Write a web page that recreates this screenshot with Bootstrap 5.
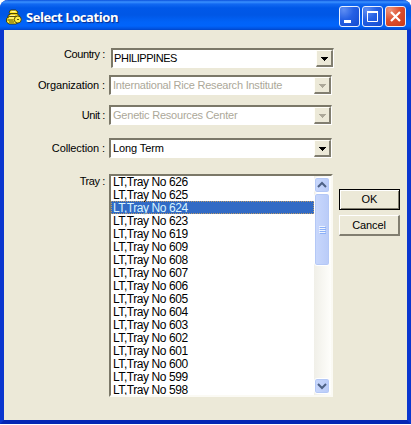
<!DOCTYPE html>
<html lang="en">
<head>
<meta charset="utf-8">
<title>Select Location</title>
<link href="https://cdn.jsdelivr.net/npm/bootstrap@5.3.0/dist/css/bootstrap.min.css" rel="stylesheet">
<style>
body{background:#fff;font:11px/13px "Liberation Sans",Arial,sans-serif;color:#000}
.win{width:411px;height:424px;background:#ece9d8;border:solid;border-width:0 4px 4px;border-color:#0a3fd6 #0a36cf #0427b4;border-radius:8px 8px 0 0}
.titlebar{height:30px;margin:0 -4px;padding:3px 5px 0 6px;border-radius:8px 8px 0 0;background:linear-gradient(#0a50dc 0,#3a91ff 2px,#1269f2 4px,#0058e8 8px,#0057e6 15px,#0163f8 22px,#0164fb 26px,#0150dc 29px,#0144c6 30px)}
.caption{font:bold 13px/18px "Open Sans",sans-serif;color:#fff;text-shadow:1px 1px 1px #0b2b8a;letter-spacing:-.42px;margin-left:4px}
.winbtns{gap:2px}
.winbtn{width:21px;height:21px;border:1px solid #e8f0ff;border-radius:3px;background:radial-gradient(circle at 20% 15%,#5f8ef2,#2560e4 45%,#134bd0)}
.winbtn.close-x{background:radial-gradient(circle at 20% 15%,#ee957c,#dd5030 45%,#c8391a)}
.formrow{padding-left:4px}
.lbl{width:97px;text-align:right;white-space:pre}
.combo{width:223px;height:20px;background:#fff;border:solid;border-width:2px 1px 1px 2px;border-color:#7b7868 #fff #fff #7b7868;padding-left:2px;white-space:pre}
.combo.first{margin-left:6px;padding-left:1px}
.combo.off{color:#aca899}
.drop{width:17px;height:17px;background:#ece9d8;border:solid;border-width:1px 2px 2px 1px;border-color:#fffef8 #817e70 #817e70 #fffef8}
.tray{width:224px;height:223px;background:#fff;border:solid;border-width:2px;border-color:#7b7868 #fbfaf4 #fbfaf4 #7b7868}
.items{font-size:12px;letter-spacing:-.43px;line-height:15px;margin-top:-1px}
.items li{height:13px;padding-left:2px;white-space:pre}
.items li.on{background:#316ac5;color:#d8f4ff;outline:1px dotted #b99a6a;outline-offset:-1px}
.bar{width:17px;background:linear-gradient(90deg,#f0efe8,#fefefb);padding:1px 0}
.sb{background:linear-gradient(90deg,#c9d8fc,#b9cbf8);border:1px solid #fff;box-shadow:inset 0 0 0 1px #b4c8f6;border-radius:3px;width:16px}
.thumb{height:73px}
.push{width:61px;height:21px;font:11px/13px "Liberation Sans",Arial,sans-serif;color:#000;background:#ece9d8;border:solid;border-width:1px 2px 2px 1px;border-color:#fff #817e70 #817e70 #fff;padding:0}
.push.main{border:1px solid #000;box-shadow:inset 1px 1px #fff,inset -1px -1px #817e70}
.actions{margin-left:6px;padding-top:15px;gap:5px}
.r1{margin-top:18px}.r2{margin-top:7px}.r3{margin-top:10px}.r4{margin-top:13px}.r5{margin-top:16px}
.r5 .lbl{padding-top:1px}
.s1{letter-spacing:-.4px}.s2{letter-spacing:-.1px}.s3{letter-spacing:-.22px}.s4{letter-spacing:-.45px}
</style>
<script src="https://cdn.jsdelivr.net/npm/bootstrap@5.3.0/dist/js/bootstrap.bundle.min.js"></script>
</head>
<body class="overflow-hidden">
<main class="win">
  <header class="titlebar d-flex align-items-center">
    <svg width="16" height="16" viewBox="0 0 16 16" stroke="#2b2800" stroke-width=".8"><path d="M4.500 1h5l2.500 2-1 2H5L3 3.500z" fill="#ffe92d"/><path d="M2 6.500l3-2h6l2.500 2.500v2H2z" fill="#e6cc1c"/><path d="M.5 9.500l3-2h6l2.500 2v4l-2 1.500H3L.5 13z" fill="#ffe92d"/><circle cx="11.800" cy="10.500" r="3.500" fill="#fff04a"/><path d="M1.500 11h6M3 13h5M11 10.500h2" fill="none"/><path d="M5.500 2.500h4M4 6.500h5M3 9h5" stroke="#fffbc0"/></svg>
    <div class="caption">Select Location</div>
    <div class="d-flex ms-auto winbtns">
      <span class="winbtn"><svg class="d-block" width="19" height="19"><path d="M4 13h7v3H4z" fill="#fff"/></svg></span>
      <span class="winbtn"><svg class="d-block" width="19" height="19"><path d="M4.500 5.500h10v9h-10zM4 5.500h11M4 4.500h11" fill="none" stroke="#fff"/></svg></span>
      <span class="winbtn close-x"><svg class="d-block" width="19" height="19"><path d="M5 5l9 9M14 5l-9 9" stroke="#fff" stroke-width="2.200"/></svg></span>
    </div>
  </header>
  <div class="d-flex formrow r1"><div class="lbl s1">Country :</div><div class="combo first d-flex justify-content-between align-items-center"><span class="s4">PHILIPPINES</span><span class="drop"><svg class="d-block" width="14" height="14"><path d="M4 6h7v1h-1v1H9v1H8v1H7V9H6V8H5V7H4z"/></svg></span></div></div>
  <div class="d-flex formrow r2 align-items-center"><div class="lbl s2">Organization :</div><div class="combo off d-flex justify-content-between align-items-center ms-1"><span class="s3">International Rice Research Institute</span><span class="drop"><svg class="d-block" width="14" height="14"><path d="M4 6h7v1h-1v1H9v1H8v1H7V9H6V8H5V7H4z" fill="#aca899"/></svg></span></div></div>
  <div class="d-flex formrow r3 align-items-center"><div class="lbl s1">Unit :</div><div class="combo off d-flex justify-content-between align-items-center ms-1"><span class="s3">Genetic Resources Center</span><span class="drop"><svg class="d-block" width="14" height="14"><path d="M4 6h7v1h-1v1H9v1H8v1H7V9H6V8H5V7H4z" fill="#aca899"/></svg></span></div></div>
  <div class="d-flex formrow r4 align-items-center"><div class="lbl s2">Collection :</div><div class="combo d-flex justify-content-between align-items-center ms-1"><span class="s2">Long Term</span><span class="drop"><svg class="d-block" width="14" height="14"><path d="M4 6h7v1h-1v1H9v1H8v1H7V9H6V8H5V7H4z"/></svg></span></div></div>
  <div class="d-flex formrow r5"><div class="lbl s1">Tray :</div>
    <div class="tray d-flex ms-1 overflow-hidden">
      <ul class="items list-unstyled flex-grow-1 mb-0"><li>LT,Tray No 626</li><li>LT,Tray No 625</li><li class="on">LT,Tray No 624</li><li>LT,Tray No 623</li><li>LT,Tray No 619</li><li>LT,Tray No 609</li><li>LT,Tray No 608</li><li>LT,Tray No 607</li><li>LT,Tray No 606</li><li>LT,Tray No 605</li><li>LT,Tray No 604</li><li>LT,Tray No 603</li><li>LT,Tray No 602</li><li>LT,Tray No 601</li><li>LT,Tray No 600</li><li>LT,Tray No 599</li><li>LT,Tray No 598</li></ul>
      <div class="bar d-flex flex-column">
        <span class="sb"><svg class="d-block" width="14" height="14"><path d="M3 9l4-4 4 4" fill="none" stroke="#4d6185" stroke-width="2"/></svg></span>
        <span class="sb thumb d-flex align-items-center justify-content-center"><svg width="7" height="8"><path d="M0 .5h6M0 2.500h6M0 4.500h6M0 6.500h6" stroke="#eef4fe"/><path d="M1 1.500h6M1 3.500h6M1 5.500h6M1 7.500h6" stroke="#8cb0f8"/></svg></span>
        <span class="sb mt-auto"><svg class="d-block" width="14" height="14"><path d="M3 5l4 4 4-4" fill="none" stroke="#4d6185" stroke-width="2"/></svg></span>
      </div>
    </div>
    <div class="d-flex flex-column actions"><button class="push main">OK</button><button class="push s2">Cancel</button></div>
  </div>
</main>
</body>
</html>
